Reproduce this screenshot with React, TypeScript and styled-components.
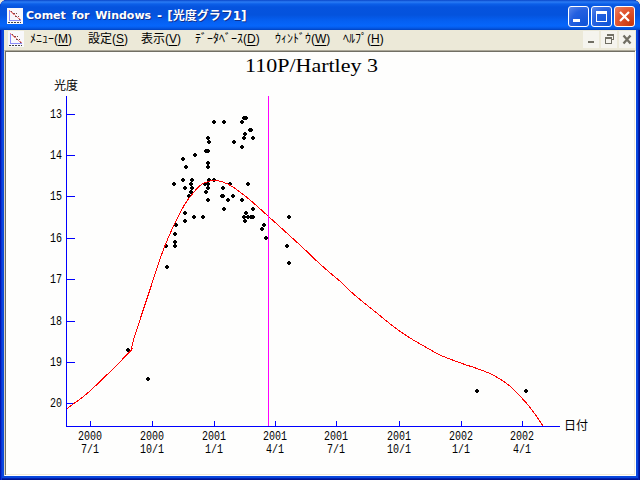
import React from 'react';
import styled, { createGlobalStyle } from 'styled-components';

const Global = createGlobalStyle`
  html, body { margin: 0; padding: 0; width: 640px; height: 480px; overflow: hidden; background: #e9e7da; }
  * { box-sizing: border-box; }
`;

const Frame = styled.div`
  width: 640px;
  height: 480px;
  display: flex;
  flex-direction: column;
  padding: 0 4px 4px;
  border-radius: 7px 7px 0 0;
  overflow: hidden;
  background: #0a48dc;
  box-shadow: inset 1px 0 #0018b0, inset 2px 0 #0831d9, inset -1px 0 #00138c, inset -2px 0 #0020b8, inset 0 -1px #00138c, inset 0 -2px #0020b0;
`;

const TitleBar = styled.header`
  height: 30px;
  flex: none;
  margin: 0 -4px;
  padding: 2px 5px 0 7px;
  display: flex;
  align-items: center;
  background: linear-gradient(180deg, #0a46c8 0, #2a7cf5 2px, #0c5fe8 4px, #0553de 7px, #0453dd 15px, #0560f2 21px, #0666fb 26px, #0559e6 28px, #0142c0 30px);
`;

const AppTitle = styled.h1`
  margin: 0 auto 0 3px;
  display: flex;
  font: bold 12px/18px 'DejaVu Sans', 'Noto Sans CJK JP', sans-serif;
  color: #fff;
  text-shadow: 1px 1px #10308c;
  white-space: pre;
`;

const TitlePart = styled.span<{ $w: number; $size: number; $gap?: number }>`
  width: ${p => p.$w}px;
  font-size: ${p => p.$size}px;
  word-spacing: ${p => p.$gap ?? 0}px;
`;

const WindowButtons = styled.div`
  display: flex;
  gap: 2px;
`;

const WindowButton = styled.button<{ $close?: boolean }>`
  width: 21px;
  height: 21px;
  padding: 0;
  border: 1px solid #fff;
  border-radius: 3px;
  display: block;
  background: ${p => p.$close
    ? 'radial-gradient(circle at 85% 90%, #c8380e, #e2552f 60%, #e98468)'
    : 'radial-gradient(circle at 85% 90%, #0f54d8, #2460e0 60%, #5c88ea)'};
  svg { display: block; }
`;

const MenuBar = styled.nav`
  height: 20px;
  flex: none;
  padding: 0 0 2px 4px;
  display: flex;
  align-items: center;
  background: #ece9d8;
`;

const MenuList = styled.div`
  display: flex;
  gap: 14px;
  margin: 0 auto 0 6px;
`;

const MenuItem = styled.span<{ $w: number }>`
  width: ${p => p.$w}px;
  font: 12px/16px 'Liberation Sans', 'Noto Sans CJK JP', sans-serif;
  color: #000;
  white-space: nowrap;
  u { text-underline-offset: 2px; text-decoration-thickness: 1px; }
`;

const ChildButtons = styled.div`
  display: flex;
  gap: 2px;
  padding-right: 1px;
`;

const ChildButton = styled.button`
  width: 16px;
  height: 17px;
  padding: 0;
  border: 0;
  background: #f5f4ee;
  svg { display: block; }
`;

const Client = styled.main`
  flex: 1;
  min-height: 0;
  padding: 1px;
  border: 1px solid;
  border-color: #aca899 #fff #fff #d8d4c4;
  background: #fefefd;
  box-shadow: inset 1px 1px #716f64, inset -1px -1px #f1ead8;
  svg { display: block; }
`;

const AxisText = styled.text`
  font: 12px 'Noto Sans CJK JP', sans-serif;
  fill: #000;
`;

const TickText = styled.text`
  font: 12px 'Liberation Mono', monospace;
  fill: #000;
`;

const ChartTitle = styled.text`
  font: 18px 'Liberation Serif', serif;
  fill: #000;
`;

const GraphIcon = () => (
  <svg width="16" height="16" viewBox="0 0 16 16" shapeRendering="crispEdges">
    <path d="M0 0h16v16H0z" fill="#f8f8fc" />
    <path d="M2.500 2v10.500H14" stroke="#8c8cf8" fill="none" />
    <path d="M2.500 2.500l11 9.500" stroke="#f08484" fill="none" />
    <path d="M4 3h1v1H4zM6 5h2v1H6zM9 5h1v1H9zM8 8h2v1H8zM11 8h1v1h-1zM12 11h1v1h-1z" fill="#7c4848" />
    <path d="M1 14.500h13" stroke="#444" strokeDasharray="2 1" />
  </svg>
);

const yTicks: [number, number][] = [[13, 114], [14, 155], [15, 196], [16, 238], [17, 279], [18, 321], [19, 362], [20, 403]];
const xTicks: [string, string, number][] = [
  ['2000', '7/1', 90], ['2000', '10/1', 152], ['2001', '1/1', 214], ['2001', '4/1', 275],
  ['2001', '7/1', 336], ['2001', '10/1', 399], ['2002', '1/1', 461], ['2002', '4/1', 522],
];
const observations: [number, number][] = [
  [128, 350], [148, 379], [477, 391], [526, 391], [167, 267], [166, 246], [175, 246], [175, 242], [175, 234], [176, 225],
  [185, 221], [185, 213], [194, 217], [203, 217], [174, 184], [183, 180], [183, 159], [186, 167], [195, 155], [192, 180],
  [191, 184], [185, 188], [192, 188], [191, 192], [189, 196], [208, 138], [209, 142], [206, 151], [208, 151], [208, 163],
  [208, 167], [209, 180], [214, 180], [205, 184], [208, 184], [208, 188], [206, 192], [208, 200], [214, 122], [224, 122],
  [242, 122], [244, 118], [246, 118], [250, 130], [251, 130], [245, 134], [244, 138], [253, 138], [234, 142], [242, 147],
  [230, 184], [248, 184], [223, 188], [222, 196], [223, 196], [233, 196], [228, 200], [242, 200], [224, 209], [246, 213],
  [253, 209], [244, 217], [248, 217], [251, 217], [253, 217], [245, 221], [264, 225], [262, 229], [266, 238], [289, 217],
  [287, 246], [289, 263],
];
const rising: [number, number][] = [[67, 409], [73, 404], [79, 400], [90, 391], [103, 378.5], [115, 367], [127, 354.5], [132, 349.5]];
const magnitude: [number, number][] = [
  [132.5, 349], [133.5, 340], [153.3, 279.5], [159, 262], [166, 243], [175, 223], [185, 204], [195.7, 190], [200, 185.5], [205, 182.5],
  [214, 180.5], [223, 182], [233, 187], [250, 200], [268.5, 216.5], [300.5, 245.5], [320.5, 264.5], [342, 283], [354, 294.5],
  [375.5, 312], [396, 328.5], [412.5, 339.5], [430, 349.5], [440, 355], [462, 363.5], [477, 368.5], [493, 375], [508, 384.5],
  [520, 396], [532, 410], [543, 426],
];

/** Smooth cubic path through the given points (Catmull-Rom). */
const smooth = (pts: [number, number][]) =>
  pts.slice(1).reduce((d, p, i) => {
    const a = pts[Math.max(i - 1, 0)], b = pts[i], n = pts[Math.min(i + 2, pts.length - 1)];
    return `${d}C${b[0] + (p[0] - a[0]) / 6} ${b[1] + (p[1] - a[1]) / 6} ${p[0] - (n[0] - b[0]) / 6} ${p[1] - (n[1] - b[1]) / 6} ${p[0]} ${p[1]}`;
  }, `M${pts[0][0]} ${pts[0][1]}`);

const Chart = () => (
  <svg width="628" height="422" viewBox="6 52 628 422">
    <ChartTitle x="245" y="72" textLength="133" lengthAdjust="spacingAndGlyphs">110P/Hartley 3</ChartTitle>
    <AxisText x="54" y="90" textLength="24">光度</AxisText>
    <AxisText x="564" y="430" textLength="24">日付</AxisText>
    {yTicks.map(([v, y]) => (
      <TickText key={v} x="50" y={y + 4} textLength="12" lengthAdjust="spacingAndGlyphs">{v}</TickText>
    ))}
    {xTicks.map(([year, day, x]) => (
      <React.Fragment key={x}>
        <TickText x={x - 12} y="440" textLength="24" lengthAdjust="spacingAndGlyphs">{year}</TickText>
        <TickText x={x - day.length * 3} y="452.500" textLength={day.length * 6} lengthAdjust="spacingAndGlyphs">{day}</TickText>
      </React.Fragment>
    ))}
    <g shapeRendering="crispEdges" fill="none">
      <path d="M66.500 96V426.500H560" stroke="#0000ff" />
      {yTicks.map(([v, y]) => <path key={v} d={`M67 ${y + 0.5}h8`} stroke="#0000ff" />)}
      {xTicks.map(([, , x]) => <path key={x} d={`M${x + 0.5} 421v5`} stroke="#0000ff" />)}
      {observations.map(([x, y], i) => (
        <path key={i} d={`M${x - 1} ${y - 2}h2v1h1v2h-1v1h-2v-1h-1v-2h1z`} fill="#000" />
      ))}
      <path d={smooth(rising)} stroke="#ff0000" />
      <path d={smooth(magnitude)} stroke="#ff0000" />
      <path d="M268.500 96v330" stroke="#ff00ff" />
    </g>
  </svg>
);

export default function App() {
  return (
    <>
      <Global />
      <Frame>
        <TitleBar>
          <GraphIcon />
          <AppTitle>
            <TitlePart $w={131} $size={11} $gap={2}>Comet for Windows</TitlePart>
            <TitlePart $w={94} $size={12} $gap={1}>- [光度グラフ1]</TitlePart>
          </AppTitle>
          <WindowButtons>
            <WindowButton aria-label="最小化"><svg width="19" height="19"><path d="M4 12h7v3H4z" fill="#fff" /></svg></WindowButton>
            <WindowButton aria-label="最大化"><svg width="19" height="19"><path d="M4 4h11v11H4zM5 7v7h9V7z" fillRule="evenodd" fill="#fff" /></svg></WindowButton>
            <WindowButton $close aria-label="閉じる"><svg width="19" height="19"><path d="M5 5l9 9M14 5l-9 9" stroke="#fff" strokeWidth="2.200" /></svg></WindowButton>
          </WindowButtons>
        </TitleBar>
        <MenuBar>
          <GraphIcon />
          <MenuList>
            <MenuItem $w={44}>ﾒﾆｭｰ(<u>M</u>)</MenuItem>
            <MenuItem $w={39}>設定(<u>S</u>)</MenuItem>
            <MenuItem $w={40}>表示(<u>V</u>)</MenuItem>
            <MenuItem $w={66}>ﾃﾞｰﾀﾍﾞｰｽ(<u>D</u>)</MenuItem>
            <MenuItem $w={54}>ｳｨﾝﾄﾞｳ(<u>W</u>)</MenuItem>
            <MenuItem $w={42}>ﾍﾙﾌﾟ(<u>H</u>)</MenuItem>
          </MenuList>
          <ChildButtons>
            <ChildButton aria-label="最小化"><svg width="16" height="17"><path d="M5 10h6v2H5z" fill="#716f64" /></svg></ChildButton>
            <ChildButton aria-label="元に戻す"><svg width="16" height="17"><path d="M6 3h7v6h-2V8h1V5H6zM4 6h7v7H4zM5 8v4h5V8z" fillRule="evenodd" fill="#716f64" /></svg></ChildButton>
            <ChildButton aria-label="閉じる"><svg width="16" height="17"><path d="M4.500 4.500l7 8M11.500 4.500l-7 8" stroke="#716f64" strokeWidth="2.300" /></svg></ChildButton>
          </ChildButtons>
        </MenuBar>
        <Client><Chart /></Client>
      </Frame>
    </>
  );
}
